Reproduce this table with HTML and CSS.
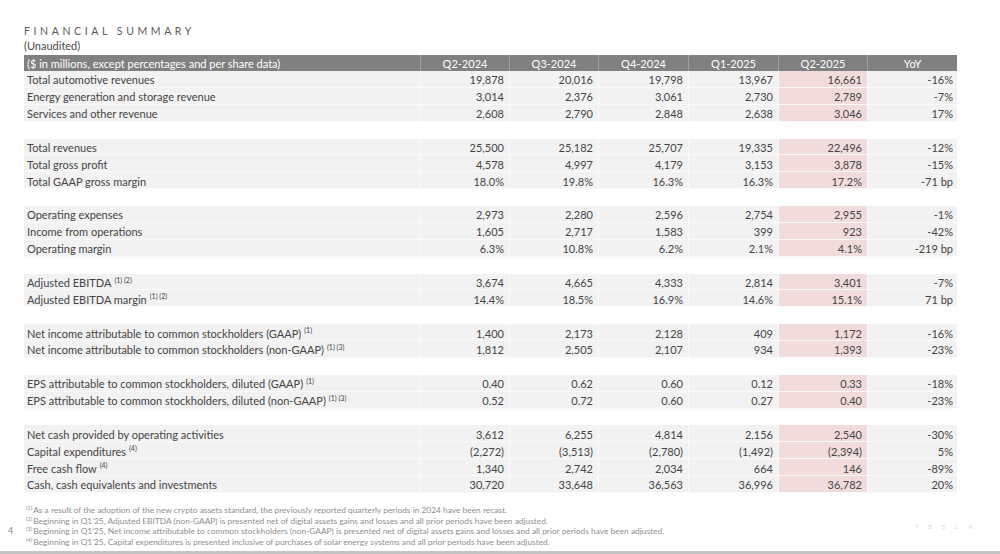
FILE: index.html
```html
<!DOCTYPE html>
<html lang="en">
<head>
<meta charset="utf-8">
<title>Financial Summary</title>
<link rel="stylesheet" href="styles.css">
</head>
<body>
<div class="page">
  <div class="title">FINANCIAL SUMMARY</div>
  <div class="subtitle">(Unaudited)</div>
  <div class="table">
    <div class="row head">
      <div class="c lbl">($ in millions, except percentages and per share data)</div>
      <div class="c">Q2-2024</div><div class="c">Q3-2024</div><div class="c">Q4-2024</div><div class="c">Q1-2025</div><div class="c">Q2-2025</div><div class="c">YoY</div>
    </div>
    <div class="row"><div class="c lbl">Total automotive revenues</div><div class="c">19,878</div><div class="c">20,016</div><div class="c">19,798</div><div class="c">13,967</div><div class="c hl">16,661</div><div class="c">-16%</div></div>
    <div class="row"><div class="c lbl">Energy generation and storage revenue</div><div class="c">3,014</div><div class="c">2,376</div><div class="c">3,061</div><div class="c">2,730</div><div class="c hl">2,789</div><div class="c">-7%</div></div>
    <div class="row"><div class="c lbl">Services and other revenue</div><div class="c">2,608</div><div class="c">2,790</div><div class="c">2,848</div><div class="c">2,638</div><div class="c hl">3,046</div><div class="c">17%</div></div>
    <div class="row blank"></div>
    <div class="row"><div class="c lbl">Total revenues</div><div class="c">25,500</div><div class="c">25,182</div><div class="c">25,707</div><div class="c">19,335</div><div class="c hl">22,496</div><div class="c">-12%</div></div>
    <div class="row"><div class="c lbl">Total gross profit</div><div class="c">4,578</div><div class="c">4,997</div><div class="c">4,179</div><div class="c">3,153</div><div class="c hl">3,878</div><div class="c">-15%</div></div>
    <div class="row"><div class="c lbl">Total GAAP gross margin</div><div class="c">18.0%</div><div class="c">19.8%</div><div class="c">16.3%</div><div class="c">16.3%</div><div class="c hl">17.2%</div><div class="c">-71 bp</div></div>
    <div class="row blank"></div>
    <div class="row"><div class="c lbl">Operating expenses</div><div class="c">2,973</div><div class="c">2,280</div><div class="c">2,596</div><div class="c">2,754</div><div class="c hl">2,955</div><div class="c">-1%</div></div>
    <div class="row"><div class="c lbl">Income from operations</div><div class="c">1,605</div><div class="c">2,717</div><div class="c">1,583</div><div class="c">399</div><div class="c hl">923</div><div class="c">-42%</div></div>
    <div class="row"><div class="c lbl">Operating margin</div><div class="c">6.3%</div><div class="c">10.8%</div><div class="c">6.2%</div><div class="c">2.1%</div><div class="c hl">4.1%</div><div class="c">-219 bp</div></div>
    <div class="row blank"></div>
    <div class="row"><div class="c lbl">Adjusted EBITDA <sup class="fn">(1) (2)</sup></div><div class="c">3,674</div><div class="c">4,665</div><div class="c">4,333</div><div class="c">2,814</div><div class="c hl">3,401</div><div class="c">-7%</div></div>
    <div class="row"><div class="c lbl">Adjusted EBITDA margin <sup class="fn">(1) (2)</sup></div><div class="c">14.4%</div><div class="c">18.5%</div><div class="c">16.9%</div><div class="c">14.6%</div><div class="c hl">15.1%</div><div class="c">71 bp</div></div>
    <div class="row blank"></div>
    <div class="row"><div class="c lbl">Net income attributable to common stockholders (GAAP) <sup class="fn">(1)</sup></div><div class="c">1,400</div><div class="c">2,173</div><div class="c">2,128</div><div class="c">409</div><div class="c hl">1,172</div><div class="c">-16%</div></div>
    <div class="row"><div class="c lbl">Net income attributable to common stockholders (non-GAAP) <sup class="fn">(1) (3)</sup></div><div class="c">1,812</div><div class="c">2,505</div><div class="c">2,107</div><div class="c">934</div><div class="c hl">1,393</div><div class="c">-23%</div></div>
    <div class="row blank"></div>
    <div class="row"><div class="c lbl">EPS attributable to common stockholders, diluted (GAAP) <sup class="fn">(1)</sup></div><div class="c">0.40</div><div class="c">0.62</div><div class="c">0.60</div><div class="c">0.12</div><div class="c hl">0.33</div><div class="c">-18%</div></div>
    <div class="row"><div class="c lbl">EPS attributable to common stockholders, diluted (non-GAAP) <sup class="fn">(1) (3)</sup></div><div class="c">0.52</div><div class="c">0.72</div><div class="c">0.60</div><div class="c">0.27</div><div class="c hl">0.40</div><div class="c">-23%</div></div>
    <div class="row blank"></div>
    <div class="row"><div class="c lbl">Net cash provided by operating activities</div><div class="c">3,612</div><div class="c">6,255</div><div class="c">4,814</div><div class="c">2,156</div><div class="c hl">2,540</div><div class="c">-30%</div></div>
    <div class="row"><div class="c lbl">Capital expenditures <sup class="fn">(4)</sup></div><div class="c">(2,272)</div><div class="c">(3,513)</div><div class="c">(2,780)</div><div class="c">(1,492)</div><div class="c hl">(2,394)</div><div class="c">5%</div></div>
    <div class="row"><div class="c lbl">Free cash flow <sup class="fn">(4)</sup></div><div class="c">1,340</div><div class="c">2,742</div><div class="c">2,034</div><div class="c">664</div><div class="c hl">146</div><div class="c">-89%</div></div>
    <div class="row"><div class="c lbl">Cash, cash equivalents and investments</div><div class="c">30,720</div><div class="c">33,648</div><div class="c">36,563</div><div class="c">36,996</div><div class="c hl">36,782</div><div class="c">20%</div></div>
  </div>
  <div class="footer">
    <div class="pagenum">4</div>
    <div class="notes">
      <p><sup>(1)</sup>As a result of the adoption of the new crypto assets standard, the previously reported quarterly periods in 2024 have been recast.</p>
      <p><sup>(2)</sup>Beginning in Q1’25, Adjusted EBITDA (non-GAAP) is presented net of digital assets gains and losses and all prior periods have been adjusted.</p>
      <p><sup>(3)</sup>Beginning in Q1’25, Net income attributable to common stockholders (non-GAAP) is presented net of digital assets gains and losses and all prior periods have been adjusted.</p>
      <p><sup>(4)</sup>Beginning in Q1’25, Capital expenditures is presented inclusive of purchases of solar energy systems and all prior periods have been adjusted.</p>
    </div>
    <div class="logo">TESLA</div>
  </div>
</div>
<div class="bottombar"></div>
</body>
</html>
```

FILE: styles.css
```css
html, body {
  margin: 0;
  padding: 0;
  background: #ffffff;
}
body {
  width: 1000px;
  height: 554px;
  overflow: hidden;
  font-family: Lato, "Open Sans", "Liberation Sans", sans-serif;
  color: #444444;
  position: relative;
}
.page {
  padding: 24px 0 0 24px;
}
.title {
  font-size: 10.5px;
  line-height: 14px;
  letter-spacing: 3.6px;
  color: #5a5a5a;
}
.subtitle {
  font-size: 11px;
  line-height: 14px;
  margin-top: 1px;
  color: #4a4a4a;
}
.table {
  margin-top: 2px;
  width: 933px;
}
.row {
  display: grid;
  grid-template-columns: 397px 89px 89px 90px 90px 89px 89px;
  height: 16.875px;
}
.row.head {
  height: 16px;
}
.row.blank {
  background: #ffffff;
}
.c {
  box-sizing: border-box;
  background: #f2f2f2;
  border-right: 1px solid #fafafa;
  border-bottom: 1px solid #fafafa;
  font-size: 11px;
  display: flex;
  align-items: center;
  justify-content: flex-end;
  padding-right: 5px;
  padding-top: 2px;
  white-space: nowrap;
}
.c:last-child {
  border-right: none;
  padding-right: 4px;
}
.c.lbl {
  justify-content: flex-start;
  padding-left: 3px;
}
.c.hl {
  background: #f2dcdb;
}
.head .c {
  background: #808080;
  color: #ffffff;
  justify-content: center;
  padding-right: 0;
  padding-top: 0;
  border-right: 1px solid #a0a0a0;
  border-bottom: none;
}
.head .c:last-child {
  border-right: none;
}
.head .c.lbl {
  justify-content: flex-start;
  padding-left: 3px;
}
.fn {
  font-size: 7px;
  margin-left: 3px;
  align-self: flex-start;
  margin-top: 0;
  line-height: 8px;
}
.footer {
  display: flex;
  align-items: flex-start;
  margin-top: 12px;
  position: relative;
}
.pagenum {
  position: absolute;
  left: -16px;
  top: 20px;
  font-size: 9px;
  color: #8c8c8c;
}
.notes {
  margin-left: 2px;
  color: #8f8f8f;
  font-size: 8.4px;
}
.notes p {
  margin: 0;
  height: 10.8px;
  line-height: 10.8px;
  white-space: nowrap;
}
.notes sup {
  font-size: 5.5px;
  line-height: 0;
  vertical-align: 3px;
  margin-right: 1px;
}
.logo {
  position: absolute;
  left: 891px;
  top: 18px;
  font-size: 6px;
  letter-spacing: 10px;
  color: #d8d8d8;
}
.bottombar {
  position: absolute;
  left: 0;
  right: 0;
  bottom: 0;
  height: 3px;
  background: #c4c4c4;
}
```
